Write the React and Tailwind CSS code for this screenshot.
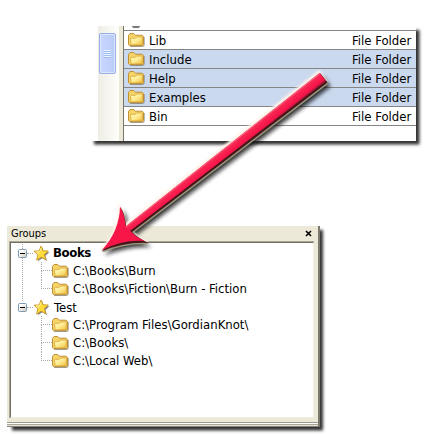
import React from "react";

function Folder() {
  return (
    <svg className="block h-4 w-[17px] shrink-0" viewBox="0 0 17 16">
      <defs>
        <linearGradient id="folderFront" x1="0" y1="0" x2="1" y2="1">
          <stop offset="0" stopColor="#fff8bd" />
          <stop offset=".5" stopColor="#ffec92" />
          <stop offset="1" stopColor="#efbc3e" />
        </linearGradient>
      </defs>
      <path d="M2.2 14.5h12.3q1.7 0 1.7-1.8V5" fill="none" stroke="#77746c" strokeWidth="1" opacity=".7" />
      <path d="M.5 12.6V3.5L2 1.5h3.6l1.8 1.7h6.6l1.5 1.3v8.1q0 1-1.2 1H1.8Z" fill="#f7d467" stroke="#b9872a" strokeWidth=".9" strokeLinejoin="round" />
      <path d="M3.1 12.9 2.5 7.3q0-1 1-1h3.8l1.3-1.3h4.7q1 0 1 1v5.8q0 1.1-1.1 1.1Z" fill="url(#folderFront)" stroke="#d19f30" strokeWidth=".7" />
    </svg>
  );
}

function Star() {
  return (
    <svg className="block h-[17px] w-[17px] shrink-0" viewBox="0 0 17 17">
      <path d="m8 1 2 4.7 5.3.3-4 3.5 1.6 5.2-4.7-2.6-4.6 3 1.3-5.4L1 6.2l5.2-.3Z" fill="#65615b" opacity=".8" transform="translate(1.1 1.2)" />
      <path d="m8 1 2 4.7 5.3.3-4 3.5 1.6 5.2-4.7-2.6-4.6 3 1.3-5.4L1 6.2l5.2-.3Z" fill="#ffdc3c" stroke="#cd9a25" strokeLinejoin="round" strokeWidth=".9" />
      <path d="m7.9 3.3-1.1 3.5-3.4.3L6 9.3" fill="none" stroke="#fff2a0" />
    </svg>
  );
}

function Toggle() {
  return (
    <svg className="block h-[9px] w-[9px] shrink-0" viewBox="0 0 9 9">
      <defs>
        <linearGradient id="toggleFill" x1="0" y1="0" x2="1" y2="1">
          <stop offset=".3" stopColor="#fff" />
          <stop offset="1" stopColor="#c9c3b4" />
        </linearGradient>
      </defs>
      <rect x=".5" y=".5" width="8" height="8" rx="1" fill="url(#toggleFill)" stroke="#7f9db9" />
      <path d="M2 4.5h5" stroke="#000" />
    </svg>
  );
}

const files = [
  ["Lib", false],
  ["Include", true],
  ["Help", true],
  ["Examples", true],
  ["Bin", false],
];

function FileList() {
  return (
    <section className="ml-[90px] flex h-[115px] w-[326px] overflow-hidden bg-white">
      <div className="ml-2 w-[21px] shrink-0 bg-linear-to-r from-[#eeede5] to-[#fefefb] pl-px pt-[7px]">
        <div className="flex h-[41px] w-[17px] flex-col items-center justify-center rounded-[2px] border border-[#98b0e8] bg-linear-to-r from-[#c9d7ff] to-[#b8cbf8] shadow-[inset_0_0_0_1px_#dce6ff]">
          <i className="block h-px w-[7px] bg-[#eef4ff]" />
          <i className="block h-px w-[7px] bg-[#9dbbf8]" />
          <i className="block h-px w-[7px] bg-[#eef4ff]" />
          <i className="block h-px w-[7px] bg-[#9dbbf8]" />
          <i className="block h-px w-[7px] bg-[#eef4ff]" />
          <i className="block h-px w-[7px] bg-[#9dbbf8]" />
          <i className="block h-px w-[7px] bg-[#eef4ff]" />
          <i className="block h-px w-[7px] bg-[#9dbbf8]" />
        </div>
      </div>
      <div className="w-1 shrink-0 bg-[#ece9d8]" />
      <div className="w-px shrink-0 bg-[#77746b]" />
      <div className="flex-1">
        <div className="h-[5px] border-b border-[#858585] pl-2">
          <div className="h-[2px] w-2 rounded-b-full bg-[#777]" />
        </div>
        {files.map(([name, selected]) => (
          <div key={name} className={`flex h-[19px] items-center border-b border-[#858585] pl-1 ${selected ? "bg-[#cbd9ef]" : "bg-white"}`}>
            <Folder />
            <span className="ml-1 flex-1">{name}</span>
            <span className="w-[64px]">File Folder</span>
          </div>
        ))}
      </div>
    </section>
  );
}

function Child({ path, last }) {
  return (
    <div className="flex h-[18px] items-center">
      <div className="ml-[30px] flex h-full w-[11px] shrink-0 flex-col">
        <div className="h-[9px] border-b border-l border-dotted border-[#aaa]" />
        <div className={`flex-1 border-[#aaa] ${last ? "" : "border-l border-dotted"}`} />
      </div>
      <Folder />
      <span className="ml-1 whitespace-pre pb-0.5">{path}</span>
    </div>
  );
}

function Group({ name, bold, paths, connected }) {
  return (
    <div className={connected ? "-mb-1 bg-[linear-gradient(#aaa_50%,transparent_50%)] bg-[length:1px_2px] bg-[position:11px_0] bg-repeat-y pb-1" : ""}>
      <div className="flex h-[18px] items-center pl-[7px]">
        <Toggle />
        <div className="w-1.5 border-t border-dotted border-[#aaa]" />
        <Star />
        <span className={bold ? "ml-[3px] pb-0.5 font-bold tracking-[-0.35px]" : "ml-1"}>{name}</span>
      </div>
      {paths.map((path, index) => <Child key={path} path={path} last={index === paths.length - 1} />)}
    </div>
  );
}

function GroupsPanel() {
  return (
    <section className="ml-[7px] mt-[85px] flex h-[201px] w-[313px] flex-col border-r-2 border-r-[#7b786e] bg-[#ece9d8]">
      <header className="flex h-[15px] shrink-0 items-center pl-1 pr-[6px] text-[11px]">
        <span className="flex-1">Groups</span>
        <svg className="h-[7px] w-[7px]" viewBox="0 0 7 7"><path d="m1 1 5 5M6 1 1 6" stroke="#000" strokeWidth="1.6" /></svg>
      </header>
      <div className="ml-[2px] mr-1 h-[177px] shrink-0 border-l border-t border-[#aca899] bg-white">
        <div className="h-full border-b border-l border-r border-t border-b-[#f1efe2] border-l-[#716f64] border-r-[#f1efe2] border-t-[#716f64] pt-px">
          <Group name="Books" bold connected paths={["C:\\Books\\Burn", "C:\\Books\\Fiction\\Burn - Fiction"]} />
          <Group name="Test" paths={["C:\\Program Files\\GordianKnot\\", "C:\\Books\\", "C:\\Local Web\\"]} />
        </div>
      </div>
      <div className="mt-auto h-[5px] shrink-0 border-b border-t border-b-[#85827a] border-t-[#9d9a8d] bg-[#e4e1d3]">
        <div className="h-px bg-white" />
        <div className="h-px bg-[#aaa799]" />
      </div>
    </section>
  );
}

function Shadows() {
  return (
    <svg className="absolute inset-0 h-[434px] w-[427px]" viewBox="0 0 427 434">
      <filter id="softShadow"><feGaussianBlur stdDeviation="1.7" /></filter>
      <g fill="#333" filter="url(#softShadow)">
        <path d="M94 135H413V30h6.5v114.5H94Z" />
        <path d="M12 420h305V230h6v200.5H12Z" />
      </g>
    </svg>
  );
}

function Arrow() {
  const outline = "M101.5 251.5 Q120 232 120 206 Q125.5 214 125 226.5 L320 72.5 L327.5 82.5 L132 232 Q139 239 149 243 Q125 241.5 101.5 251.5Z";
  return (
    <svg className="absolute inset-0 h-[434px] w-[427px]" viewBox="0 0 427 434">
      <defs>
        <linearGradient id="redBevel" gradientUnits="userSpaceOnUse" x1="219.5" y1="150.5" x2="227" y2="160">
          <stop offset="0" stopColor="#ffadb8" />
          <stop offset=".25" stopColor="#f72853" />
          <stop offset=".7" stopColor="#f8144a" />
          <stop offset="1" stopColor="#851530" />
        </linearGradient>
        <filter id="arrowShadow"><feGaussianBlur stdDeviation="1.9" /></filter>
        <filter id="arrowGlow"><feGaussianBlur stdDeviation="1" /></filter>
        <filter id="bevelSoft"><feGaussianBlur stdDeviation=".4" /></filter>
      </defs>
      <path d={outline} fill="#111" opacity=".85" transform="translate(3 4)" filter="url(#arrowShadow)" />
      <path d={outline} fill="#fff3e9" stroke="#fff3e9" strokeWidth="2" transform="translate(-1 -1)" filter="url(#arrowGlow)" />
      <g filter="url(#bevelSoft)">
        <path d={outline} fill="#999779" transform="translate(.8 1.3)" />
        <path d="M101.5 251.5 Q121 232 120.5 208 Q125 215 126 226.5 L320 73 L327.5 82.5 L132 232 Q139 239 149 243 Q125 241.5 101.5 251.5Z" fill="#48131c" />
        <path d="M102 250 Q119.5 231 120 206.5 Q125 215 125.5 226.5 L319.5 73 L325.8 80.8 L130 230.8 Q137 238 144.5 241 Q124 239 102 250Z" fill="#f8144a" />
        <path d="M125.5 226.5 319.5 73 325.8 80.8 130 230.8Z" fill="url(#redBevel)" />
      </g>
    </svg>
  );
}

export default function App() {
  return (
    <main className="relative isolate h-[434px] w-[427px] overflow-hidden bg-white pt-[26px] font-['DejaVu_Sans_Condensed','DejaVu_Sans',sans-serif] text-[13px] leading-none text-black">
      <Shadows />
      <div className="relative">
        <FileList />
        <GroupsPanel />
      </div>
      <Arrow />
    </main>
  );
}
